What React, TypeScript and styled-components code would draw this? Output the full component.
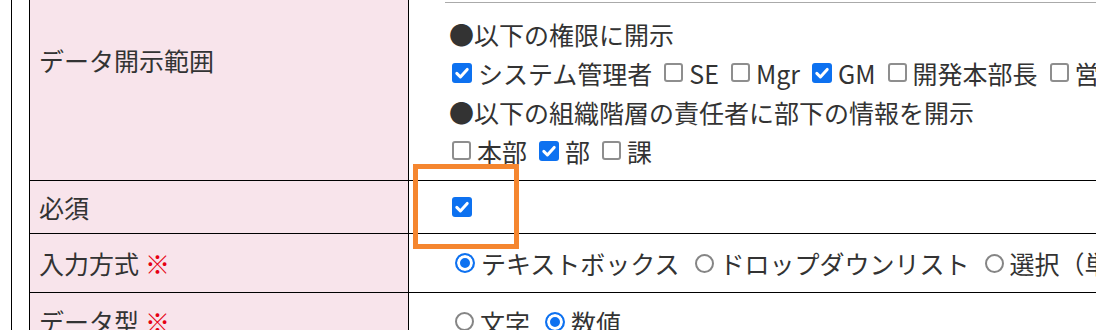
import styled, { createGlobalStyle } from "styled-components";

const GlobalStyle = createGlobalStyle`
  html, body {
    margin: 0;
    padding: 0;
    background: #fff;
    overflow: hidden;
  }
  body {
    font-family: "Noto Sans CJK JP", "Noto Sans", sans-serif;
    color: #333;
  }
`;

const Frame = styled.div`
  margin-left: 11px;
  padding-left: 17px;
  border-left: 1px solid #000;
  width: 1300px;
`;

const Row = styled.div<{ $h: number }>`
  display: grid;
  grid-template-columns: 380px 1fr;
  height: ${(p) => p.$h}px;
`;

const Label = styled.div<{ $top?: boolean }>`
  box-sizing: border-box;
  background: #f8e4eb;
  border-left: 1px solid #000;
  border-right: 1px solid #000;
  border-bottom: 1px solid #000;
  padding: ${(p) => (p.$top ? "41px" : "0")} 9px 0;
  display: flex;
  align-items: ${(p) => (p.$top ? "flex-start" : "center")};
  font-size: 25px;
  line-height: 39px;
`;

const Required = styled.span`
  color: #e60012;
  margin-left: 6px;
`;

const Value = styled.div<{ $top?: boolean }>`
  box-sizing: border-box;
  position: relative;
  border-bottom: 1px solid #000;
  padding: ${(p) => (p.$top ? "2px 0 10px 40px" : "0 0 0 40px")};
  display: flex;
  flex-direction: column;
  justify-content: ${(p) => (p.$top ? "flex-start" : "center")};
  font-size: 25px;
  white-space: nowrap;
`;

const Rule = styled.div`
  border-top: 1px solid #aaa;
  margin-left: -4px;
  margin-bottom: 11px;
`;

const Line = styled.div`
  display: flex;
  align-items: center;
  height: 39px;
  gap: 9px;
`;

const Option = styled.span`
  flex-shrink: 0;
  display: inline-flex;
  align-items: center;
  gap: 6px;
`;

const Box = styled.span<{ $on: boolean }>`
  flex-shrink: 0;
  box-sizing: border-box;
  display: inline-flex;
  align-items: center;
  justify-content: center;
  width: ${(p) => (p.$on ? 20 : 19)}px;
  height: ${(p) => (p.$on ? 20 : 19)}px;
  margin: 0 0 0 3px;
  border-radius: 3px;
  background: ${(p) => (p.$on ? "#0d71f0" : "#fff")};
  border: ${(p) => (p.$on ? "none" : "2px solid #8e8e8e")};
`;

const Dot = styled.span<{ $on: boolean }>`
  flex-shrink: 0;
  box-sizing: border-box;
  display: inline-block;
  width: ${(p) => (p.$on ? 20 : 19)}px;
  height: ${(p) => (p.$on ? 20 : 19)}px;
  margin: 0 0 0 6px;
  border-radius: 50%;
  border: ${(p) => (p.$on ? "2px solid #0d71f0" : "2px solid #858585")};
  background: ${(p) => (p.$on ? "#0d71f0" : "#fff")};
  box-shadow: ${(p) => (p.$on ? "inset 0 0 0 3px #fff" : "none")};
`;

const Highlight = styled.div`
  position: absolute;
  left: 4px;
  top: -17px;
  width: 106px;
  height: 85px;
  box-sizing: border-box;
  border: 5px solid #f5862f;
  pointer-events: none;
  z-index: 2;
`;

const Check = ({ on }: { on: boolean }) => (
  <Box $on={on}>
    {on && (
      <svg width="20" height="20" viewBox="0 0 20 20">
        <path
          d="M4.8 10.4 L8.4 14 L15.2 6.4"
          fill="none"
          stroke="#fff"
          strokeWidth="3"
          strokeLinecap="round"
          strokeLinejoin="round"
        />
      </svg>
    )}
  </Box>
);

const CheckOption = ({ on, text }: { on: boolean; text: string }) => (
  <Option>
    <Check on={on} />
    {text}
  </Option>
);

const RadioOption = ({ on, text }: { on: boolean; text: string }) => (
  <Option>
    <Dot $on={on} />
    {text}
  </Option>
);

const roles = [
  { text: "システム管理者", on: true },
  { text: "SE", on: false },
  { text: "Mgr", on: false },
  { text: "GM", on: true },
  { text: "開発本部長", on: false },
  { text: "営業本部長", on: false },
];

const levels = [
  { text: "本部", on: false },
  { text: "部", on: true },
  { text: "課", on: false },
];

const inputTypes = [
  { text: "テキストボックス", on: true },
  { text: "ドロップダウンリスト", on: false },
  { text: "選択（単一）", on: false },
];

const dataTypes = [
  { text: "文字", on: false },
  { text: "数値", on: true },
];

export default function App() {
  return (
    <>
      <GlobalStyle />
      <Frame>
        <Row $h={181}>
          <Label $top>データ開示範囲</Label>
          <Value $top>
            <Rule />
            <Line>●以下の権限に開示</Line>
            <Line>
              {roles.map((r) => (
                <CheckOption key={r.text} on={r.on} text={r.text} />
              ))}
            </Line>
            <Line>●以下の組織階層の責任者に部下の情報を開示</Line>
            <Line>
              {levels.map((l) => (
                <CheckOption key={l.text} on={l.on} text={l.text} />
              ))}
            </Line>
          </Value>
        </Row>
        <Row $h={53}>
          <Label>必須</Label>
          <Value>
            <Line>
              <Check on />
            </Line>
            <Highlight />
          </Value>
        </Row>
        <Row $h={59}>
          <Label>
            入力方式<Required>※</Required>
          </Label>
          <Value>
            <Line>
              {inputTypes.map((t) => (
                <RadioOption key={t.text} on={t.on} text={t.text} />
              ))}
            </Line>
          </Value>
        </Row>
        <Row $h={58}>
          <Label>
            データ型<Required>※</Required>
          </Label>
          <Value>
            <Line>
              {dataTypes.map((t) => (
                <RadioOption key={t.text} on={t.on} text={t.text} />
              ))}
            </Line>
          </Value>
        </Row>
      </Frame>
    </>
  );
}
